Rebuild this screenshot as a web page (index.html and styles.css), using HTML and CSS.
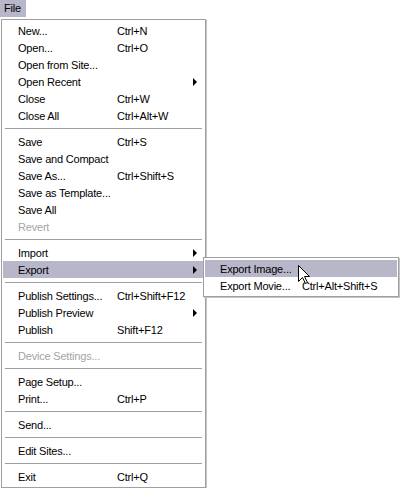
FILE: index.html
```html
<!DOCTYPE html>
<html>
<head>
<meta charset="utf-8">
<title>File menu</title>
<link rel="stylesheet" href="styles.css">
</head>
<body>
<div class="menubar">
  <div class="menubar-item active">File</div>
</div>
<div class="menu main-menu">
  <div class="item"><span class="label">New...</span><span class="key">Ctrl+N</span></div>
  <div class="item"><span class="label">Open...</span><span class="key">Ctrl+O</span></div>
  <div class="item"><span class="label">Open from Site...</span></div>
  <div class="item"><span class="label">Open Recent</span><span class="key"></span><span class="arrow"></span></div>
  <div class="item"><span class="label">Close</span><span class="key">Ctrl+W</span></div>
  <div class="item"><span class="label">Close All</span><span class="key">Ctrl+Alt+W</span></div>
  <div class="sep"></div>
  <div class="item"><span class="label">Save</span><span class="key">Ctrl+S</span></div>
  <div class="item"><span class="label">Save and Compact</span></div>
  <div class="item"><span class="label">Save As...</span><span class="key">Ctrl+Shift+S</span></div>
  <div class="item"><span class="label">Save as Template...</span></div>
  <div class="item"><span class="label">Save All</span></div>
  <div class="item disabled"><span class="label">Revert</span></div>
  <div class="sep"></div>
  <div class="item"><span class="label">Import</span><span class="key"></span><span class="arrow"></span></div>
  <div class="item selected has-sub"><span class="label">Export</span><span class="key"></span><span class="arrow"></span>
    <div class="menu submenu">
      <div class="item selected"><span class="label">Export Image...</span></div>
      <div class="item"><span class="label">Export Movie...</span><span class="key">Ctrl+Alt+Shift+S</span></div>
    </div>
  </div>
  <div class="sep"></div>
  <div class="item"><span class="label">Publish Settings...</span><span class="key">Ctrl+Shift+F12</span></div>
  <div class="item"><span class="label">Publish Preview</span><span class="key"></span><span class="arrow"></span></div>
  <div class="item"><span class="label">Publish</span><span class="key">Shift+F12</span></div>
  <div class="sep"></div>
  <div class="item disabled"><span class="label">Device Settings...</span></div>
  <div class="sep"></div>
  <div class="item"><span class="label">Page Setup...</span></div>
  <div class="item"><span class="label">Print...</span><span class="key">Ctrl+P</span></div>
  <div class="sep"></div>
  <div class="item"><span class="label">Send...</span></div>
  <div class="sep"></div>
  <div class="item"><span class="label">Edit Sites...</span></div>
  <div class="sep"></div>
  <div class="item"><span class="label">Exit</span><span class="key">Ctrl+Q</span></div>
</div>
<svg class="cursor" width="13" height="20" viewBox="0 0 13 20">
  <path d="M0.5 0.5 L0.5 16.5 L4.5 12.5 L7.5 18.5 L9.5 17.5 L6.5 11.5 L11.5 11.5 Z" fill="#fff" stroke="#000" stroke-width="1" stroke-linejoin="miter"/>
</svg>
</body>
</html>
```

FILE: styles.css
```css
html, body {
  margin: 0;
  padding: 0;
  background: #fff;
}

body {
  position: relative;
  width: 400px;
  height: 488px;
  overflow: hidden;
  font-family: "Liberation Sans", Arial, sans-serif;
  font-size: 11px;
  letter-spacing: -0.2px;
  color: #000;
}

.menubar {
  display: flex;
  height: 17px;
}

.menubar-item {
  padding: 0 5px 0 4px;
  line-height: 17px;
}

.menubar-item.active {
  background: #b8b6c9;
}

.menu {
  background: #fff;
  border: 1px solid #a0a0a0;
  padding: 2px 1px;
  box-shadow: 1px 1px 0 #c4c4c4;
}

.main-menu {
  margin: 2px 0 0 1px;
  width: 201px;
}

.item {
  position: relative;
  display: flex;
  align-items: center;
  height: 17px;
  padding-left: 15px;
  white-space: nowrap;
}

.item.selected {
  background: #b8b6c9;
}

.item.disabled {
  color: #a4a4a4;
}

.label {
  flex: none;
  width: 99px;
}

.key {
  flex: 1;
}

.arrow {
  width: 0;
  height: 0;
  border-top: 4px solid transparent;
  border-bottom: 4px solid transparent;
  border-left: 4px solid #000;
  margin-right: 7px;
}

.sep {
  height: 1px;
  margin: 4px 2px;
  background: #a0a0a0;
}

.submenu {
  position: absolute;
  left: 200px;
  top: -4px;
  width: 192px;
}

.submenu .item .label {
  width: 82px;
}

.cursor {
  position: absolute;
  left: 298px;
  top: 265px;
}
```
